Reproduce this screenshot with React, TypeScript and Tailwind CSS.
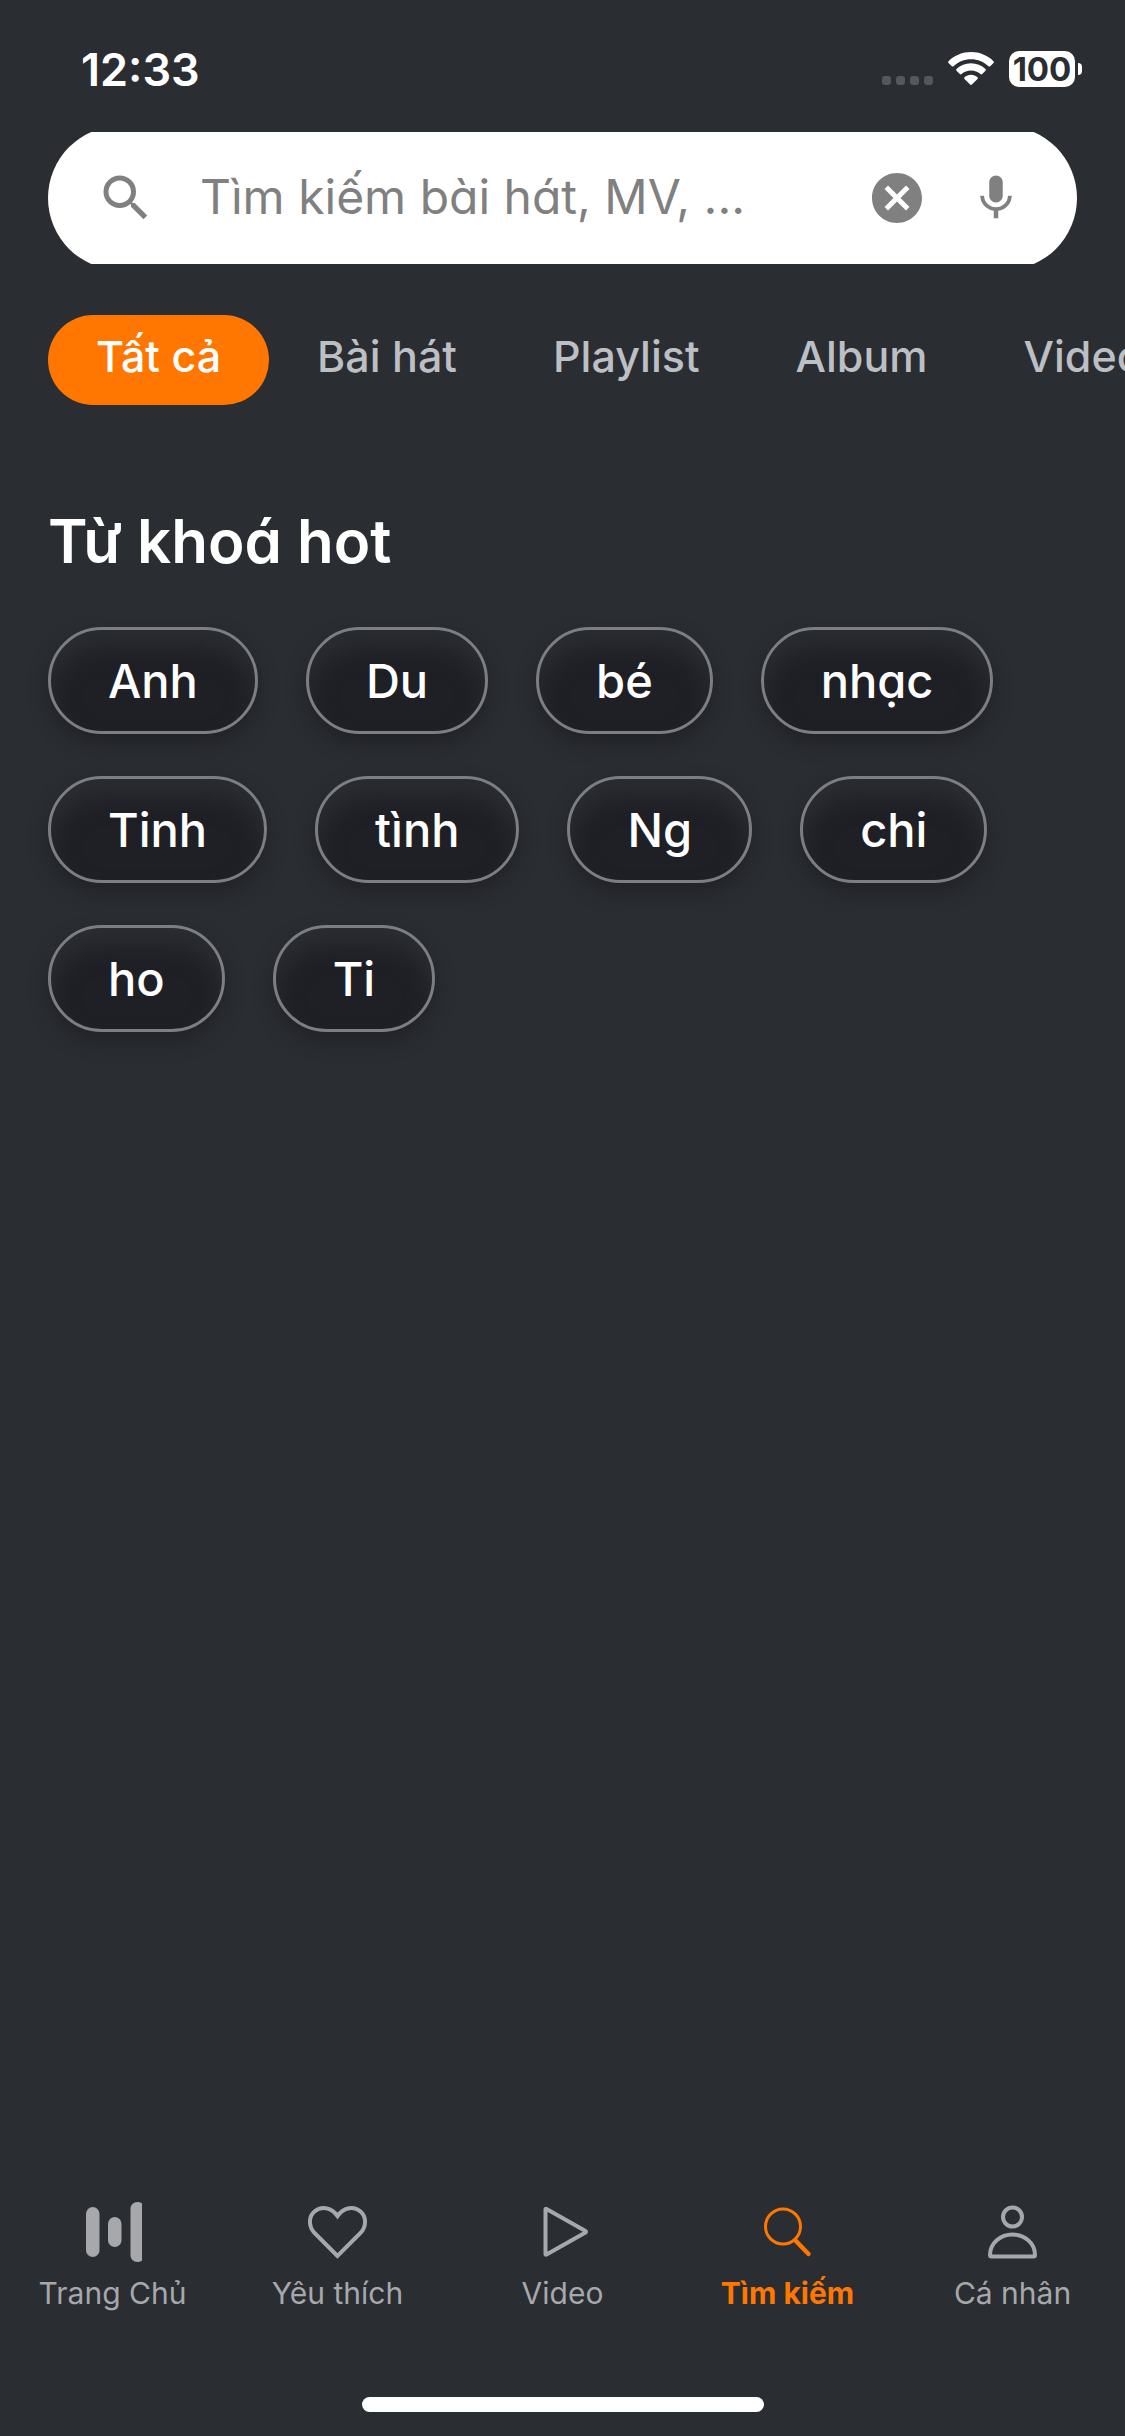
import React, { useState } from 'react';
import { MdCancel, MdMic, MdSearch } from 'react-icons/md';

const HomeIcon = () => (
  <svg className="h-15 w-15" viewBox="0 0 60 60" fill="currentColor">
    <rect x="3" y="5" width="13.5" height="50" rx="6.75" />
    <rect x="25" y="15" width="13.5" height="30" rx="6.75" />
    <path d="M59 1.2V58.8C57.6 59.6 56 60 54.2 60 50.5 60 47.5 57 47.5 53.3V6.7C47.5 3 50.5 0 54.2 0 56 0 57.6 .4 59 1.2Z" />
  </svg>
);

const HeartIcon = () => (
  <svg className="h-15 w-15" viewBox="1 0 60 60" fill="none" stroke="currentColor" strokeWidth={4}>
    <path d="M30.500 54 7 30.500C1.500 24 1.500 14.500 7.500 9.500 14 4 24 5 30.500 14 37 5 47 4 53.500 9.500 59.500 14.500 59.500 24 54 30.500Z" />
  </svg>
);

const VideoIcon = () => (
  <svg className="h-15 w-15" viewBox="1 0 60 60" fill="none" stroke="currentColor" strokeWidth={4} strokeLinejoin="round">
    <path d="M13.500 7.500V52Q13.500 53 14.500 52.500L53.500 30.600Q54.500 29.800 53.500 29L14.500 7Q13.500 6.500 13.500 7.500Z" />
  </svg>
);

const FindIcon = () => (
  <svg className="h-15 w-15" viewBox="1 0 60 60" fill="none" stroke="currentColor" strokeLinecap="round">
    <circle cx="26" cy="24.500" r="17.500" strokeWidth={3} />
    <path d="M38.500 38.500 51.500 52" strokeWidth={4.5} />
  </svg>
);

const UserIcon = () => (
  <svg className="h-15 w-15" viewBox="1 0 60 60" fill="none" stroke="currentColor" strokeWidth={4} strokeLinejoin="round">
    <circle cx="30.500" cy="15" r="9.500" />
    <path d="M8 53C8 41 18.500 32.500 30.500 32.500S53 41 53 53Q53 54.500 51.500 54.500H9.500Q8 54.500 8 53Z" />
  </svg>
);

const WifiIcon = () => (
  <svg className="h-[34px] w-[46px]" viewBox="0 0 46 34" fill="currentColor">
    <path d="M23 0C31.600 0 39.600 3.300 45.500 9.200 46 9.700 46 10.400 45.500 10.900L42.200 14.200C41.700 14.700 41 14.700 40.500 14.200 35.700 9.700 29.600 7.200 23 7.200S10.300 9.700 5.500 14.200C5 14.700 4.300 14.700 3.800 14.200L.5 10.900C0 10.400 0 9.700 .5 9.200 6.400 3.300 14.400 0 23 0Z" />
    <path d="M23 11.300C28.500 11.300 33.600 13.400 37.500 17.100 38 17.600 38 18.300 37.500 18.800L34.200 22.100C33.700 22.600 33 22.600 32.500 22.100 29.900 19.800 26.600 18.500 23 18.500S16.100 19.800 13.500 22.100C13 22.600 12.300 22.600 11.800 22.100L8.500 18.800C8 18.300 8 17.600 8.500 17.100 12.400 13.400 17.500 11.300 23 11.300Z" />
    <path d="M23 22.800C25.500 22.800 27.800 23.700 29.500 25.200 30 25.700 30 26.400 29.500 26.900L23.900 32.600C23.400 33.100 22.600 33.100 22.100 32.600L16.500 26.900C16 26.400 16 25.700 16.500 25.200 18.200 23.700 20.500 22.800 23 22.800Z" />
  </svg>
);

const StatusBar = () => (
  <div className="flex h-[132px] items-center justify-between pt-1.5 pr-[43px] pl-[81px]">
    <span className="text-[45px] leading-none font-semibold text-white">12:33</span>
    <div className="flex items-center text-white">
      <div className="mt-[22px] mr-[15px] flex gap-[5px]">
        {[0, 1, 2, 3].map((dot) => (
          <span key={dot} className="h-[9px] w-[9px] rounded-[3px] bg-[#55575c]" />
        ))}
      </div>
      <WifiIcon />
      <span className="mr-[3px] ml-[15px] flex h-9 w-[66px] items-center justify-center rounded-[10px] bg-white text-[33px] leading-none font-bold text-[#2a2d32]">
        100
      </span>
      <span className="h-3 w-1 rounded-r-full bg-white" />
    </div>
  </div>
);

const SearchBar = () => {
  const [query, setQuery] = useState('');

  return (
    <div className="mx-12 flex h-[132px] items-center overflow-hidden">
      <form
        role="search"
        onSubmit={(e) => e.preventDefault()}
        className="flex h-36 w-full shrink-0 items-center rounded-[72px] bg-white pr-[54px] pl-12 text-[#808080]"
      >
        <MdSearch className="h-15 w-15 shrink-0" />
        <input
          type="text"
          aria-label="Tìm kiếm"
          placeholder="Tìm kiếm bài hát, MV, ..."
          value={query}
          onChange={(e) => setQuery(e.target.value)}
          className="ml-11 h-20 min-w-0 flex-1 pb-1 text-[48px] text-[#2a2d32] outline-none [font-feature-settings:'cv11'] placeholder:text-[#808080]"
        />
        <button type="button" aria-label="Xoá" onClick={() => setQuery('')}>
          <MdCancel className="h-15 w-15" />
        </button>
        <button type="button" aria-label="Tìm bằng giọng nói" className="ml-[42px]">
          <MdMic className="h-[54px] w-[54px]" />
        </button>
      </form>
    </div>
  );
};

const tabs = ['Tất cả', 'Bài hát', 'Playlist', 'Album', 'Video'];

const FilterTabs = () => {
  const [active, setActive] = useState('Tất cả');

  return (
    <div className="mt-[51px] flex overflow-hidden pl-12">
      {tabs.map((tab) => (
        <button
          key={tab}
          type="button"
          onClick={() => setActive(tab)}
          className={`h-[90px] shrink-0 rounded-full px-12 pb-2 text-[43px] leading-none font-medium ${
            tab === active ? 'bg-[#ff7700] text-white' : 'text-[#bcbfc4]'
          }`}
        >
          {tab}
        </button>
      ))}
    </div>
  );
};

const keywords = ['Anh', 'Du', 'bé', 'nhạc', 'Tinh', 'tình', 'Ng', 'chi', 'ho', 'Ti'];

const HotKeywords = () => (
  <section className="px-12 pt-[99px] [font-feature-settings:'cv11']">
    <h2 className="text-[60px] leading-[75px] font-semibold text-white">Từ khoá hot</h2>
    <div className="mt-12 flex flex-wrap gap-x-12 gap-y-[42px]">
      {keywords.map((word) => (
        <button
          key={word}
          type="button"
          className="h-[107px] rounded-full border-3 border-[#7d7e82] bg-[#1f1f26] px-[57px] text-[47px] leading-none font-medium text-white shadow-[inset_0_18px_24px_#2a2d32,0_9px_18px_rgba(24,24,30,0.5)]"
        >
          {word}
        </button>
      ))}
    </div>
  </section>
);

const navItems = [
  { label: 'Trang Chủ', Icon: HomeIcon },
  { label: 'Yêu thích', Icon: HeartIcon },
  { label: 'Video', Icon: VideoIcon },
  { label: 'Tìm kiếm', Icon: FindIcon, active: true },
  { label: 'Cá nhân', Icon: UserIcon },
];

const BottomNav = () => (
  <nav className="mt-auto">
    <div className="grid grid-cols-5">
      {navItems.map(({ label, Icon, active }) => (
        <a
          key={label}
          href="#"
          className={`flex flex-col items-center gap-[11px] text-[30px] leading-10 ${
            active ? 'font-bold text-[#ff7700]' : 'text-[#a6a8ab]'
          }`}
        >
          <Icon />
          {label}
        </a>
      ))}
    </div>
    <div className="mx-auto mt-21 mb-6 h-[15px] w-[402px] rounded-full bg-white" />
  </nav>
);

export default function App() {
  return (
    <div className="flex min-h-screen flex-col overflow-hidden bg-[#2a2d32] font-['Inter',sans-serif]">
      <StatusBar />
      <SearchBar />
      <FilterTabs />
      <HotKeywords />
      <BottomNav />
    </div>
  );
}
